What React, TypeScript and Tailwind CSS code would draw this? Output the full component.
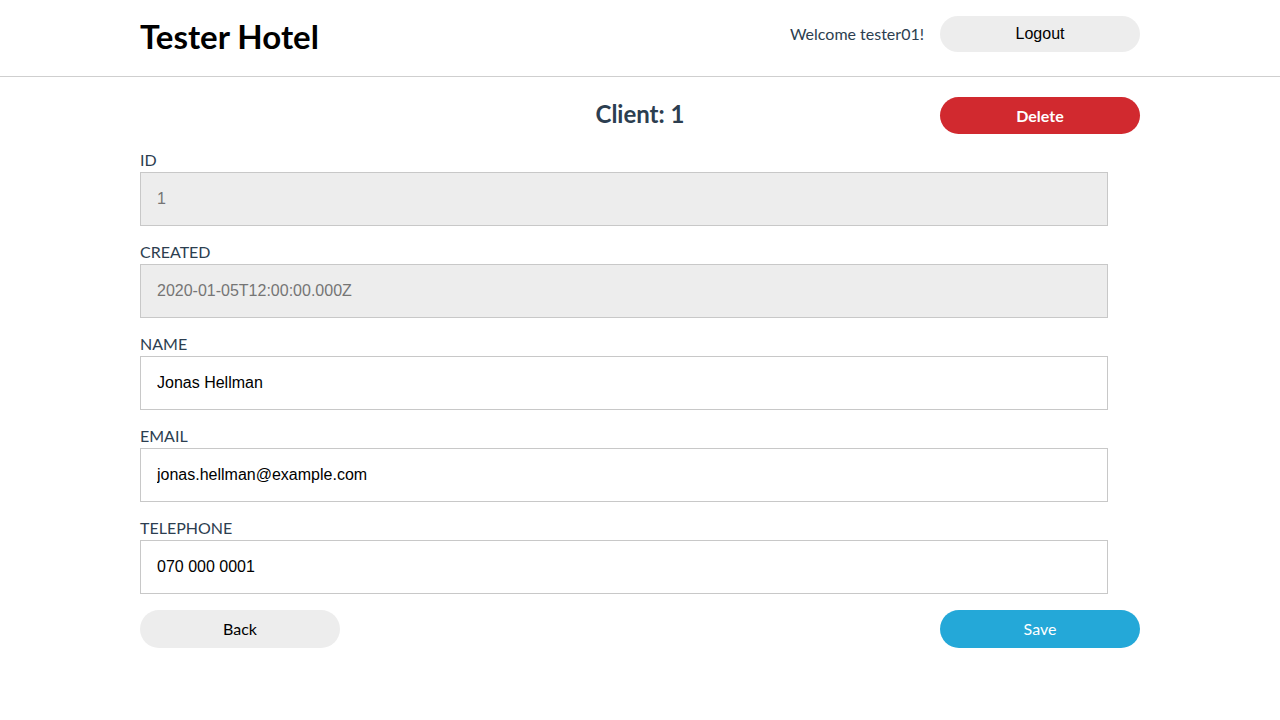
const fields = [
  { label: 'ID', value: '1', disabled: true },
  { label: 'CREATED', value: '2020-01-05T12:00:00.000Z', disabled: true },
  { label: 'NAME', value: 'Jonas Hellman', disabled: false },
  { label: 'EMAIL', value: 'jonas.hellman@example.com', disabled: false },
  { label: 'TELEPHONE', value: '070 000 0001', disabled: false },
];

export default function App() {
  return (
    <div className="min-h-[720px] bg-white font-['Lato','Noto_Sans',sans-serif]">
      {/* Header */}
      <header className="border-b border-[#cfcfcf] pt-4 pb-6">
        <div className="mx-auto flex h-9 w-[1000px] items-center justify-between">
          <h1 className="mt-1 text-[33px] font-bold leading-none text-black">Tester Hotel</h1>
          <div className="flex items-center gap-4">
            <span className="text-base text-[#2c3e50]">Welcome tester01!</span>
            <button className="h-9 w-[200px] rounded-full bg-[#ededed] font-['Liberation_Sans',sans-serif] text-base text-black">
              Logout
            </button>
          </div>
        </div>
      </header>

      <main className="mx-auto w-[1000px] pt-5">
        {/* Title row */}
        <div className="grid h-[37px] grid-cols-3 items-center">
          <div />
          <h2 className="-mt-1 text-center text-2xl font-bold leading-none text-[#2c3e50]">Client: 1</h2>
          <div className="flex justify-end">
            <button className="h-[37px] w-[200px] rounded-full bg-[#d1292f] text-base font-bold text-white">
              Delete
            </button>
          </div>
        </div>

        {/* Form */}
        <div className="mt-[18px] flex flex-col gap-[18px]">
          {fields.map((f) => (
            <div key={f.label} className="flex flex-col">
              <label className="h-5 text-base leading-4 text-[#2c3e50]">{f.label}</label>
              <input
                readOnly
                disabled={f.disabled}
                value={f.value}
                className={
                  f.disabled
                    ? "h-[54px] w-[968px] border border-[#c8c8c8] bg-[#ededed] px-4 font-['Liberation_Sans',sans-serif] text-base text-[#757575]"
                    : "h-[54px] w-[968px] border border-[#c8c8c8] bg-white px-4 font-['Liberation_Sans',sans-serif] text-base text-black"
                }
              />
            </div>
          ))}
        </div>

        {/* Actions */}
        <div className="mt-4 flex justify-between">
          <button className="h-[38px] w-[200px] rounded-full bg-[#ededed] text-base text-black">Back</button>
          <button className="h-[38px] w-[200px] rounded-full bg-[#24a8d8] text-base text-white">Save</button>
        </div>
      </main>
    </div>
  );
}
